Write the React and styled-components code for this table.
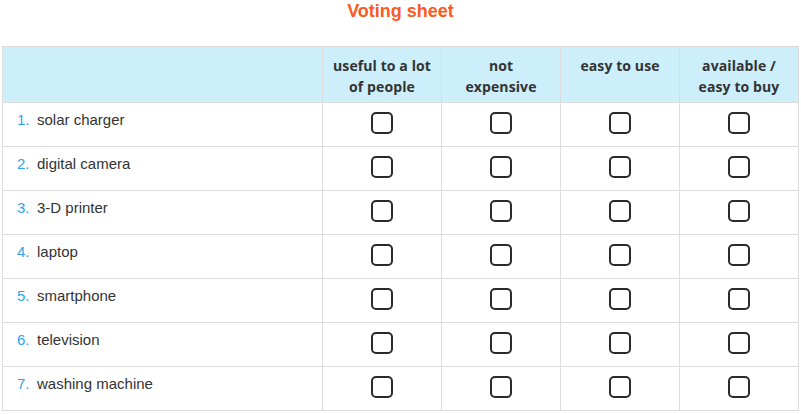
import React from "react";
import styled, { createGlobalStyle } from "styled-components";

const Global = createGlobalStyle`
  html, body { margin: 0; padding: 0; background: #fff; }
  body { font-family: "Liberation Sans", Arial, sans-serif; }
`;

const Page = styled.div`
  padding: 0 2px;
`;

const Title = styled.h1`
  margin: 0;
  height: 46px;
  padding-top: 1px;
  box-sizing: border-box;
  text-align: center;
  font-family: "Liberation Sans", Arial, sans-serif;
  font-size: 18px;
  font-weight: bold;
  line-height: 20px;
  color: #fa5a24;
`;

const Table = styled.table`
  width: 797px;
  border-collapse: collapse;
  table-layout: fixed;
`;

const HeadCell = styled.th`
  height: 56px;
  box-sizing: border-box;
  background: #cdeefb;
  border: 1px solid #dcdcdc;
  padding: 8px 2px 0;
  vertical-align: top;
  text-align: center;
  font-family: "Open Sans", sans-serif;
  font-size: 14px;
  letter-spacing: 0.1px;
  font-weight: bold;
  line-height: 21px;
  color: #333;
  width: ${(p) => (p.$first ? "320px" : "auto")};
`;

const Cell = styled.td`
  height: 44px;
  box-sizing: border-box;
  border: 1px solid #dcdcdc;
  padding: ${(p) => (p.$label ? "7px 14px 0" : "8px 0 0")};
  vertical-align: top;
  text-align: ${(p) => (p.$label ? "left" : "center")};
  font-size: 15px;
  line-height: 20px;
  color: #333;
`;

const Num = styled.span`
  display: inline-block;
  width: 20px;
  color: #2ea3e6;
`;

const Box = styled.span`
  display: inline-block;
  width: 22px;
  height: 22px;
  box-sizing: border-box;
  border: 2px solid #2b2b2b;
  border-radius: 5px;
  background: #fff;
  vertical-align: top;
  margin-top: 1px;
`;

const cols = [
  ["useful to a lot", "of people"],
  ["not", "expensive"],
  ["easy to use"],
  ["available /", "easy to buy"],
];

const items = [
  "solar charger",
  "digital camera",
  "3-D printer",
  "laptop",
  "smartphone",
  "television",
  "washing machine",
];

export default function App() {
  return (
    <Page>
      <Global />
      <Title>Voting sheet</Title>
      <Table>
        <thead>
          <tr>
            <HeadCell $first />
            {cols.map((c, i) => (
              <HeadCell key={i}>
                {c.map((l, j) => (
                  <React.Fragment key={j}>
                    {j > 0 && <br />}
                    {l}
                  </React.Fragment>
                ))}
              </HeadCell>
            ))}
          </tr>
        </thead>
        <tbody>
          {items.map((it, i) => (
            <tr key={it}>
              <Cell $label>
                <Num>{i + 1}.</Num>
                {it}
              </Cell>
              {cols.map((_, j) => (
                <Cell key={j}>
                  <Box />
                </Cell>
              ))}
            </tr>
          ))}
        </tbody>
      </Table>
    </Page>
  );
}
